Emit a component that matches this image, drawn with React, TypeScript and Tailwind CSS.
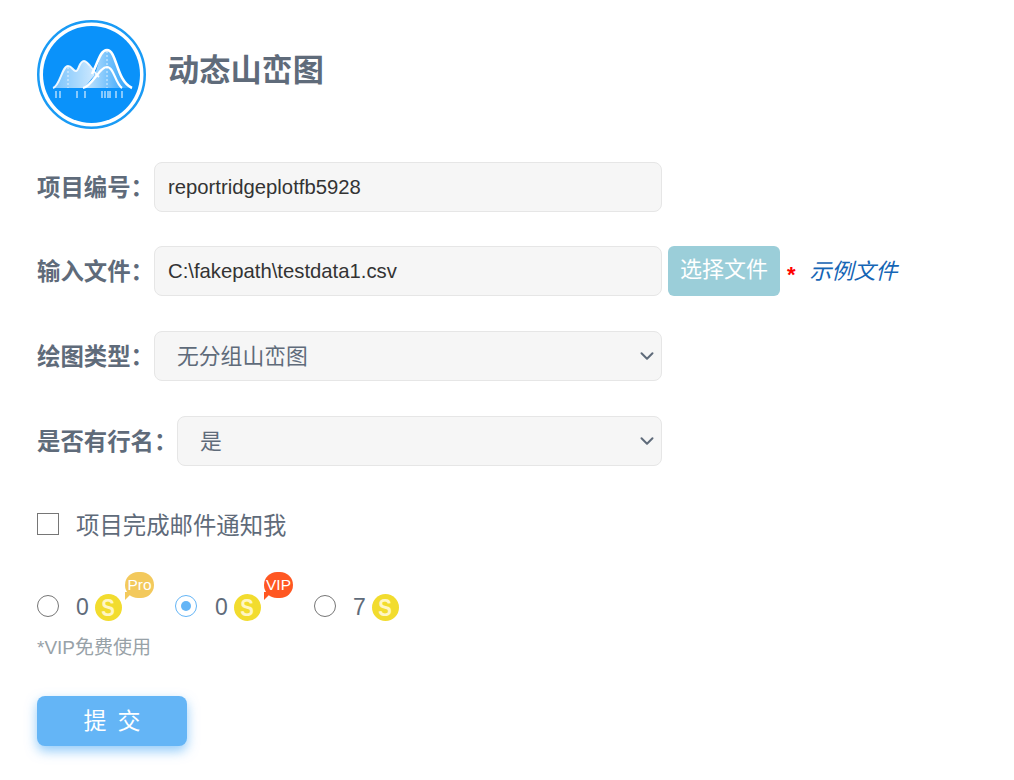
import React from "react";
import { ChevronDown } from "lucide-react";

const FONT = '"Liberation Sans","Noto Sans CJK SC",sans-serif';

function Logo() {
  return (
    <div className="w-[109px] h-[109px] shrink-0">
      <svg viewBox="0 0 109 109" width="109" height="109">
        <defs>
          <linearGradient id="g1" x1="0" y1="0" x2="1" y2="0">
            <stop offset="0" stopColor="#fff" stopOpacity="0.45" />
            <stop offset="1" stopColor="#fff" stopOpacity="0.8" />
          </linearGradient>
          <linearGradient id="g2" x1="0" y1="0" x2="1" y2="0">
            <stop offset="0" stopColor="#fff" stopOpacity="0.8" />
            <stop offset="1" stopColor="#fff" stopOpacity="0.1" />
          </linearGradient>
        </defs>
        <circle cx="54.5" cy="54.5" r="53.25" fill="#fff" stroke="#1a9bf5" strokeWidth="2.5" />
        <circle cx="54.5" cy="54.5" r="48.5" fill="#0a92fa" />
        <g transform="translate(0 1)">
          <path d="M16 67 C23 65 25 45 31 45 C35 45 36 50 39 50 C42 50 42 40 47 40 C51 40 53 47 58 54 C52 60 50 65 46 67 Z" fill="url(#g1)" />
          <path d="M16 67 C23 65 25 45 31 45 C35 45 36 50 39 50 C42 50 42 40 47 40 C52 40 55 50 62 56" fill="none" stroke="#fff" strokeOpacity="0.9" strokeWidth="2" />
          <path d="M58 54 C61 44 64 29 70 29 C80 29 80 62 95 67 L46 67 C50 65 54 60 58 54 Z" fill="url(#g2)" />
          <path d="M55 53 C61 42 63 29 70 29 C80 29 79 60 95 67" fill="none" stroke="#fff" strokeWidth="2.6" />
          <path d="M46 67 C56 65 62 46 70 46 C77 46 78 62 85 67" fill="none" stroke="#fff" strokeWidth="2.2" />
          <path d="M31 46 V67 M70 30 V67" stroke="#fff" strokeOpacity="0.75" strokeWidth="1" strokeDasharray="2 2" />
        </g>
        <path d="M19 71 V78 M23 71 V78 M40 71 V78 M48 71 V78 M65 71 V78 M68 71 V78 M71 71 V78 M73 71 V78 M79 71 V78 M85 71 V78" stroke="#fff" strokeOpacity="0.85" strokeWidth="1.2" />
      </svg>
    </div>
  );
}

function Coin() {
  return (
    <span className="flex h-[27px] w-[27px] items-center justify-center rounded-full bg-[#f2dc2e] text-[24px] font-bold leading-none text-[#fff6c4]">
      <span className="scale-x-[0.85]">S</span>
    </span>
  );
}

function Badge({ text, color, tail }: { text: string; color: string; tail: string }) {
  return (
    <span className={`absolute left-[30px] top-[-22px] flex h-[26px] w-[29px] items-center justify-center rounded-full text-[15.5px] leading-none text-white ${color}`}>
      {text}
      <span className={`absolute bottom-[-2px] left-0 h-0 w-0 border-r-[8px] border-t-[8px] border-r-transparent ${tail}`} />
    </span>
  );
}

function Radio({ checked }: { checked?: boolean }) {
  return (
    <span
      className={`mb-[4px] flex h-[22px] w-[22px] shrink-0 items-center justify-center rounded-full border bg-white ${
        checked ? "border-[#64b5f6]" : "border-[#767676]"
      }`}
    >
      {checked && <span className="h-[10px] w-[10px] rounded-full bg-[#64b5f6]" />}
    </span>
  );
}

function Price({ value, checked, badge, badgeColor, tail, className, gap }: { value: string; checked?: boolean; badge?: string; badgeColor?: string; tail?: string; className: string; gap: string }) {
  return (
    <div className={`flex items-center ${className}`}>
      <Radio checked={checked} />
      <span className={`${gap} w-[19px] text-[23px] leading-none text-[#5f6b7a]`}>{value}</span>
      <span className="relative">
        <Coin />
        {badge && <Badge text={badge} color={badgeColor ?? ""} tail={tail ?? ""} />}
      </span>
    </div>
  );
}

function Label({ children, width }: { children: React.ReactNode; width: string }) {
  return <label className={`shrink-0 whitespace-nowrap pt-[3px] text-[23.4px] font-bold text-[#5f6b7a] ${width}`}>{children}</label>;
}

const field = "h-[50px] rounded-lg border border-[#e6e6e6] bg-[#f6f6f6] flex items-center";

function SelectBox({ value, width }: { value: string; width: string }) {
  return (
    <div className={`${field} ${width} justify-between pl-[22px] pr-[3px] text-[21.8px] text-[#5f6b7a]`}>
      <span className="pt-[3px]">{value}</span>
      <ChevronDown size={22} strokeWidth={2.2} className="text-[#5f6b7a]" />
    </div>
  );
}

export default function App() {
  return (
    <div className="h-[780px] w-[1014px] overflow-hidden bg-white pl-[37px] pt-[20px]" style={{ fontFamily: FONT }}>
      <div className="flex items-center">
        <Logo />
        <h1 className="mb-[6px] ml-[22px] text-[31.2px] font-bold text-[#5f6b7a]">动态山峦图</h1>
      </div>

      <div className="mt-[33px] flex items-center">
        <Label width="w-[117px]">项目编号：</Label>
        <div className={`${field} w-[508px] px-[13px] text-[20.3px] text-[#333]`}>reportridgeplotfb5928</div>
      </div>

      <div className="mt-[34px] flex items-center">
        <Label width="w-[117px]">输入文件：</Label>
        <div className={`${field} w-[508px] px-[13px] text-[20.3px] text-[#333]`}>C:\fakepath\testdata1.csv</div>
        <button className="ml-[6px] h-[50px] w-[112px] rounded-md bg-[#9bced9] pb-[3px] text-[22px] text-white">选择文件</button>
        <span className="ml-[7px] mt-[8px] text-[22px] font-bold leading-none text-[#ff0000]">*</span>
        <a className="ml-[14px] text-[22px] italic text-[#1565b5]">示例文件</a>
      </div>

      <div className="mt-[35px] flex items-center">
        <Label width="w-[117px]">绘图类型：</Label>
        <SelectBox value="无分组山峦图" width="w-[508px]" />
      </div>

      <div className="mt-[35px] flex items-center">
        <Label width="w-[140px]">是否有行名：</Label>
        <SelectBox value="是" width="w-[485px]" />
      </div>

      <div className="mt-[47px] flex items-center">
        <span className="mb-[4px] h-[22px] w-[22px] border border-[#767676] bg-white" />
        <span className="ml-[17px] text-[23.4px] leading-[26px] text-[#5f6b7a]">项目完成邮件通知我</span>
      </div>

      <div className="mt-[55px] flex items-center">
        <Price value="0" gap="ml-[17px]" badge="Pro" badgeColor="bg-[#f3c95c]" tail="border-t-[#f3c95c]" className="w-[138px]" />
        <Price value="0" gap="ml-[18px]" checked badge="VIP" badgeColor="bg-[#ff5722]" tail="border-t-[#ff5722]" className="w-[139px]" />
        <Price value="7" gap="ml-[17px]" className="" />
      </div>

      <p className="mt-[14px] text-[19px] leading-[26px] text-[#98a2a8]">*VIP免费使用</p>

      <button className="mt-[35px] h-[50px] w-[150px] rounded-lg bg-[#64b5f6] pl-[11px] text-[23px] tracking-[11px] text-white shadow-[0_5px_12px_rgba(100,181,246,0.7)]">
        提交
      </button>
    </div>
  );
}
